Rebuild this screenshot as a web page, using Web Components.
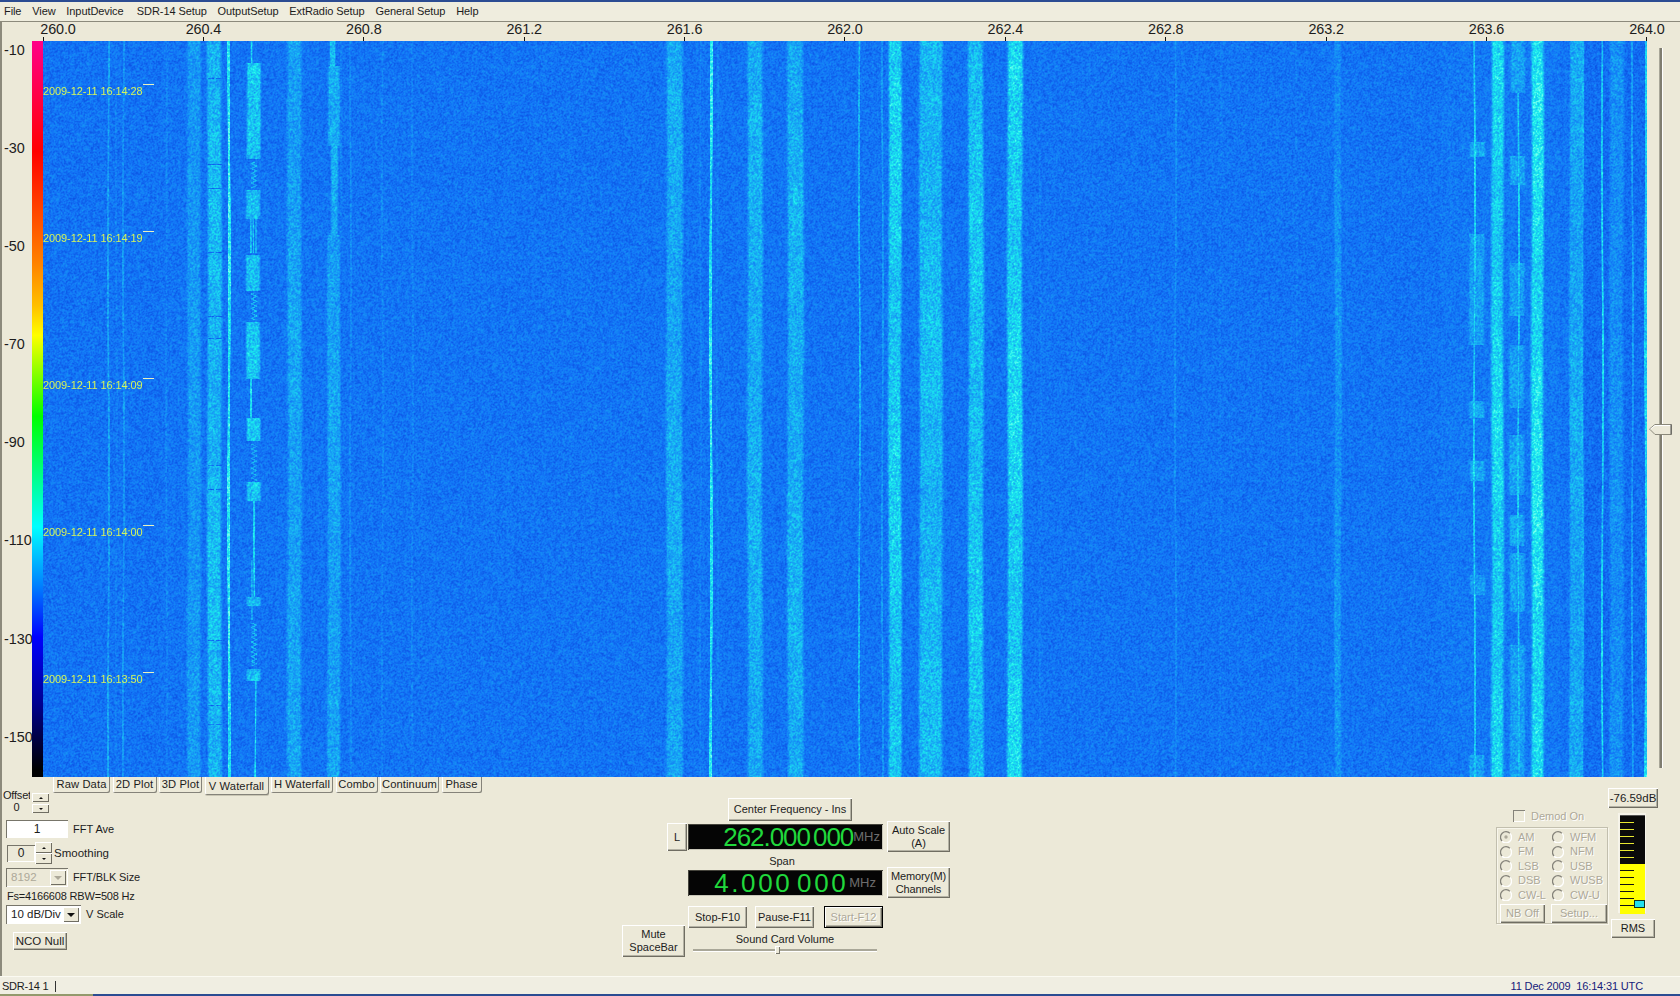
<!DOCTYPE html>
<html>
<head>
<meta charset="utf-8">
<title>SDR-14</title>
<style>
html,body{margin:0;padding:0;background:#ece9d8;overflow:hidden}
</style>
</head>
<body>
<sdr-app>
  <sdr-menu></sdr-menu>
  <sdr-plot></sdr-plot>
  <sdr-tabs></sdr-tabs>
  <sdr-controls></sdr-controls>
  <sdr-status></sdr-status>
</sdr-app>
<script>
// small base class, every element just says what goes in its shadow root
class SdrBase extends HTMLElement {
    constructor() {
        super()
        this.attachShadow({mode: 'open'})
    }
    getStyle() { return '' }
    getMarkup() { return '<slot></slot>' }
    connectedCallback() {
        if (this.done) return
        this.done = true
        const template = document.createElement('template')
        template.innerHTML = `<style>${this.getStyle()}</style>${this.getMarkup()}`
        this.shadowRoot.appendChild(template.content.cloneNode(true))
        if (this.afterRender) this.afterRender()
    }
}

class SdrApp extends SdrBase {
    getStyle() {
        return `
        :host{display:flex;flex-direction:column;width:1680px;height:996px;overflow:hidden;box-sizing:border-box;
            background:#ece9d8;border-top:2px solid #2b4c92;color:#1c1c1c;
            font:11px/13px "Liberation Sans",Arial,sans-serif}
        `
    }
}

class SdrMenu extends SdrBase {
    getStyle() {
        return `
        :host{display:flex;flex:none;box-sizing:border-box;height:19px;align-items:center;gap:10.800px;padding:0 0 1px 4px;background:#efedde;letter-spacing:-.08px}
        span{white-space:nowrap}
        span:nth-of-type(4){margin-left:2.500px}
        `
    }
    getMarkup() {
        return ['File','View','InputDevice','SDR-14 Setup','OutputSetup','ExtRadio Setup','General Setup','Help']
            .map(t => `<span>${t}</span>`).join('')
    }
}

class SdrPlot extends SdrBase {
    getStyle() {
        return `
        :host{display:block;flex:none;height:756px;border-top:1px solid #8c8a7c;border-left:2px solid #8c8a7c;box-sizing:border-box}
        .row{display:flex;margin-left:-2px;height:736px}
        sdr-xaxis{margin-left:-39.200px}
        `
    }
    getMarkup() {
        return `
        <sdr-xaxis></sdr-xaxis>
        <div class="row">
            <sdr-yaxis></sdr-yaxis>
            <sdr-colorbar></sdr-colorbar>
            <sdr-waterfall></sdr-waterfall>
            <sdr-vslider></sdr-vslider>
        </div>`
    }
}

class SdrXaxis extends SdrBase {
    getStyle() {
        return `
        :host{display:grid;grid-template-columns:repeat(11,160.4px);height:19px}
        div{display:flex;flex-direction:column;align-items:center;justify-content:flex-end}
        span{font-size:14.4px;line-height:15px;letter-spacing:-.1px}
        i{display:block;width:1px;height:4px;background:#111}
        div:first-of-type span{transform:translateX(15px)}
        `
    }
    getMarkup() {
        return ['260.0','260.4','260.8','261.2','261.6','262.0','262.4','262.8','263.2','263.6','264.0']
            .map(t => `<div><span>${t}</span><i></i></div>`).join('')
    }
}

class SdrYaxis extends SdrBase {
    getStyle() {
        return `
        :host{display:grid;grid-auto-rows:98.100px;flex:none;width:32px;box-sizing:border-box;padding-left:4px}
        span{font-size:14.4px;line-height:18px;white-space:nowrap}
        `
    }
    getMarkup() {
        return [-10,-30,-50,-70,-90,-110,-130,-150].map(t => `<span>${t}</span>`).join('')
    }
}

class SdrColorbar extends SdrBase {
    getStyle() {
        return `
        :host{display:block;flex:none;width:11px;height:736px;
            background:linear-gradient(180deg,#ff0088 0,#ff0040 8%,#ff0000 15%,#ff8000 30%,#ffc000 36%,#ffff00 40%,#00ff00 51%,#00ffff 66%,#0080ff 74%,#0000ff 81%,#000090 90%,#000000 99%)}
        `
    }
}

class SdrWaterfall extends SdrBase {
    getStyle() {
        return `
        :host{display:block;position:relative;flex:none;width:1604px;height:736px}
        canvas{display:block}
        .stamp{position:absolute;left:0;color:#d4f45c;font-size:11px;line-height:13px;white-space:nowrap;letter-spacing:-.1px}
        .stamp i{position:absolute;left:100px;top:-1px;width:11px;height:1px;background:#e8f0c0}
        `
    }
    getMarkup() {
        const stamps = [['16:14:28',44],['16:14:19',191],['16:14:09',338],['16:14:00',485],['16:13:50',632]]
        return `<canvas width="1604" height="736"></canvas>` +
            stamps.map(s => `<div class="stamp" style="top:${s[1]}px">2009-12-11 ${s[0]}<i></i></div>`).join('')
    }
    afterRender() {
        this.paint(this.shadowRoot.querySelector('canvas'))
    }
    paint(canvas) {
        const W = 1604, H = 736, X0 = 43, Y0 = 41
        const v = new Float32Array(W * H)
        let seed = 20091211
        const rnd = () => {
            seed = (seed * 1664525 + 1013904223) >>> 0
            return seed / 4294967296
        }
        const smooth = t => { t = Math.max(0, Math.min(1, t)); return t * t * (3 - 2 * t) }
        // a feature is x0,x1,y0,y1,amp plus edge softness and wobble
        const band = (x0, x1, y0, y1, amp, edge, wob) => {
            edge = edge === undefined ? 3.5 : edge
            wob = wob || 0
            if (edge >= 2) { x0 += edge * .4; x1 -= edge * .4 }
            const phase = x0 * 1.7
            for (let y = Math.max(y0, Y0); y < Math.min(y1, Y0 + H); y++) {
                const off = wob ? Math.sin(y * 1.3) * wob : Math.sin(y * .013 + phase) * .5
                const mod = 1 + .1 * Math.sin(y * .017 + phase) + .05 * Math.sin(y * .09 + phase * 2)
                const a = Math.floor(x0 - edge - 4), b = Math.ceil(x1 + edge + 4)
                for (let x = a; x < b; x++) {
                    const i = x - X0
                    if (i < 0 || i >= W) continue
                    const p = smooth((x + .5 - (x0 + off) + edge) / edge) * smooth(((x1 + off) + edge - x - .5) / edge)
                    const k = (y - Y0) * W + i
                    const val = amp * mod * p
                    if (val > v[k]) v[k] = val
                }
            }
        }
        const gap = (x0, x1, y0, y1) => {
            for (let y = y0; y < y1; y++) for (let x = x0; x < x1; x++) v[(y - Y0) * W + x - X0] = -.04
        }
        const T = 41, B = 777
        const thin = (x, amp, y0, y1) => band(x, x + 1, y0 === undefined ? T : y0, y1 === undefined ? B : y1, amp, .8)

        // left group
        thin(108, .38); thin(116, .1); thin(123, .3); thin(166, .1); thin(412, .12); thin(340, .1); thin(382, .08)
        band(188, 200, T, B, .32, 4)
        band(208, 221, T, B, .58, 3.5)
        gap(208, 222, 164, 165); gap(208, 222, 188, 189)
        ;[[78, 1], [252, 1], [316, 1], [338, 1], [465, 1], [489, 1], [640, 1], [705, 1], [724, 1]].forEach(g => {
            gap(208, 214, g[0], g[0] + g[1]); gap(216, 222, g[0], g[0] + g[1])
        })
        band(228, 230, T, B, 1, .5)
        // the bursty carrier near 260.5
        const burst = [[63,159],[190,219],[255,291],[322,379],[418,441],[482,501],[597,606],[669,681]]
        burst.forEach(s => band(247, 260, s[0], s[1], .66, 3))
        ;[[162,188],[293,320],[444,482],[623,666]].forEach(s => band(253, 255, s[0], s[1], .5, .8, 2))
        band(251, 252, T, 63, .75, .8)
        band(251, 252, 379, 418, .8, .6)
        band(250, 251, 219, 253, .6, .5); band(253, 254, 219, 253, .6, .5); band(256, 257, 219, 253, .5, .5)
        band(254, 255, 501, 597, .7, .6)
        band(255, 256, 681, B, .75, .6)
        band(251, 252, 560, 620, .45, .6)
        // 260.7
        band(288, 301, T, B, .4, 4)
        band(331, 335, T, 66, .7, 1.5)
        band(328, 339, 66, 146, .44, 3)
        band(331, 337, 146, 235, .48, 3)
        band(328, 340, 235, B, .4, 3.5)
        thin(350, .16); thin(382, .14)

        // centre group
        band(667, 682, T, B, .46, 4)
        band(710, 712, T, B, .95, .6)
        thin(700, .12); thin(717, .12)
        band(748, 762, T, B, .5, 4)
        band(788, 803, T, B, .5, 4)
        band(793, 797, 185, 205, .72, 1)
        thin(859, .55); thin(882, .3)
        band(889, 901, T, B, .74, 3.5)
        band(920, 942, T, B, .58, 4)
        band(969, 983, T, B, .66, 4)
        band(1008, 1022, T, B, .78, 4)
        thin(1175, .2); thin(1040, .08); thin(1296, .06); thin(1220, .06)
        band(1335, 1341, T, B, .2, 2.5)
        band(1335, 1341, 170, B, .3, 2.5)

        // right group
        thin(1474, .72)
        ;[[142,157],[234,345],[401,418],[461,481],[575,595],[755,777]].forEach(s => band(1470, 1484, s[0], s[1], .38, 3))
        band(1492, 1503, T, B, .74, 4)
        band(1511, 1524, T, 93, .32, 3)
        thin(1518, .65, 93, 770)
        ;[[156,185],[263,316],[345,408],[435,495],[515,546],[553,612],[645,777]].forEach(s => band(1510, 1524, s[0], s[1], .36, 3))
        gap(1510, 1516, 328, 340); gap(1520, 1525, 328, 340)
        band(1532, 1543, T, B, .88, 4)
        band(1570, 1583, T, B, .44, 3)
        thin(1582, .5)
        thin(1602, .8)
        band(1610, 1623, T, B, .3, 4)
        thin(1632, .42)
        band(1645, 1647, T, B, .8, .6)

        // per column streaks and the darker bit on the far right
        const col = new Float32Array(W)
        for (let i = 0; i < W; i++) {
            col[i] = (rnd() - .5) * .025
            const x = i + X0
            if (x > 1583 && x < 1647) col[i] -= .06
            if (x > 1440 && x < 1560) col[i] += .04
            if (x < 160) col[i] -= .015
        }
        const ctx = canvas.getContext('2d')
        const img = ctx.createImageData(W, H)
        const d = img.data
        // grain is about two pixels wide in the picture
        const gw = W + 2
        const grain = new Float32Array(gw * (H + 2))
        for (let i = 0; i < grain.length; i++) grain[i] = rnd() - .5
        const stops = [[-.3, 12, 84, 228], [0, 18, 116, 246], [.5, 24, 172, 244], [1, 26, 236, 238], [1.4, 120, 255, 240]]
        for (let y = 0; y < H; y++) {
            for (let x = 0; x < W; x++) {
                const n = (grain[y * gw + x] * 1.2 + grain[y * gw + x + 1] * .8 + grain[(y + 1) * gw + x] * .8 + grain[(y + 1) * gw + x + 1] * .4)
                const base = v[y * W + x]
                let t = base + col[x] + n * (.2 + Math.max(0, base) * .16)
                t = Math.max(-.3, Math.min(1.4, t))
                let s = 0
                while (s < stops.length - 2 && t > stops[s + 1][0]) s++
                const a = stops[s], b = stops[s + 1], f = (t - a[0]) / (b[0] - a[0])
                const k = (y * W + x) * 4
                d[k] = a[1] + (b[1] - a[1]) * f
                d[k + 1] = a[2] + (b[2] - a[2]) * f
                d[k + 2] = a[3] + (b[3] - a[3]) * f
                d[k + 3] = 255
            }
        }
        ctx.putImageData(img, 0, 0)
    }
}

class SdrVslider extends SdrBase {
    getStyle() {
        return `
        :host{display:block;position:relative;flex:1}
        .track{width:2px;height:720px;margin:7px 0 0 12px;background:#7f7d70;border-right:1px solid #fff;border-left:1px solid #a8a698}
        svg{position:absolute;left:2px;top:383px}
        `
    }
    getMarkup() {
        return `<div class="track"></div>
        <svg width="23" height="11" viewBox="0 0 23 11"><path d="M.5 5 6 .5h16.500v10H6z" fill="#ece9d8" stroke="#8a887a"/><path d="M1.500 5 6 1.500h16" fill="none" stroke="#fff"/><path d="M22 .5v10" stroke="#555"/></svg>`
    }
}

class SdrTabs extends SdrBase {
    getStyle() {
        return `
        :host{display:flex;flex:none;height:16px;padding-left:53px;gap:2.500px;position:relative;align-items:flex-start;box-shadow:inset 2px 0 #8c8a7c}
        span{display:flex;align-items:center;justify-content:center;box-sizing:border-box;height:16px;padding-bottom:2px;background:#ece9d8;white-space:nowrap;
            box-shadow:inset -1px -1px #85837a,inset 1px 0 #fff;border-radius:0 0 2px 2px;letter-spacing:.1px;font-size:11.200px}
        .on{height:18px;padding:1px 0 0;box-shadow:inset -1px -1px #85837a,inset 1px 0 #fff,0 1px #c9c6b4}
        `
    }
    getMarkup() {
        return [['Raw Data',57],['2D Plot',44],['3D Plot',43],['V Waterfall',64,1],['H Waterfall',62],['Combo',42],['Continuum',59],['Phase',40]]
            .map(t => `<span style="width:${t[1]}px"${t[2] ? ' class="on"' : ''}>${t[0]}</span>`).join('')
    }
}

class WinBtn extends SdrBase {
    getStyle() {
        return `
        :host{display:inline-flex;flex:none;box-sizing:border-box;align-items:center;justify-content:center;text-align:center;background:#ece9d8;
            white-space:nowrap;line-height:13px;
            box-shadow:inset 1px 1px #fff,inset -1px -1px #6f6d62,inset -2px -2px #b4b2a4}
        :host([disabled]){color:#aca899;text-shadow:1px 1px #fff}
        :host([default]){border:1px solid #000}
        `
    }
}

class SdrSpin extends SdrBase {
    getStyle() {
        return `
        :host{display:flex;flex:none;flex-direction:column;width:17px;justify-content:space-between}
        b{display:flex;align-items:center;justify-content:center;flex:1;max-height:var(--cell,11px);background:#ece9d8;
            box-shadow:inset 1px 1px #fff,inset -1px -1px #6f6d62}
        i{display:block;border-left:2px solid transparent;border-right:2px solid transparent}
        .u{border-bottom:2px solid #111}
        .d{border-top:2px solid #111}
        `
    }
    getMarkup() { return `<b><i class="u"></i></b><b><i class="d"></i></b>` }
}

class SdrCombo extends SdrBase {
    getStyle() {
        return `
        :host{display:flex;flex:none;box-sizing:border-box;align-items:center;background:#fff;
            box-shadow:inset 1px 1px #77756a,inset -1px -1px #fff;padding:2px}
        :host([disabled]){background:#ece9d8;color:#aca899}
        span{flex:1;padding-left:3px;font-size:11.500px}
        b{display:flex;align-items:center;justify-content:center;width:16px;height:100%;background:#ece9d8;
            box-shadow:inset 1px 1px #fff,inset -1px -1px #6f6d62}
        i{display:block;border:4px solid transparent;border-top:4px solid #111;border-bottom:0}
        :host([disabled]) i{border-top-color:#aca899}
        `
    }
    getMarkup() { return `<span><slot></slot></span><b><i></i></b>` }
}

class SdrLcd extends SdrBase {
    getStyle() {
        return `
        :host{display:flex;box-sizing:border-box;align-items:center;justify-content:flex-end;background:#050505;white-space:nowrap;
            box-shadow:inset 1px 1px #45443c,inset -1px -1px #c8c6b8}
        .num{color:#20d83c;font-size:26px;line-height:26px}
        .unit{color:#6d6d6d;font-size:13px;line-height:14px}
        `
    }
    getMarkup() {
        return `<span class="num" style="${this.getAttribute('numstyle')}">${this.getAttribute('value')}</span><span class="unit" style="${this.getAttribute('unitstyle')}">MHz</span>`
    }
}

class SdrRadio extends SdrBase {
    getStyle() {
        return `
        :host{display:flex;align-items:center;gap:6px;height:14.500px;color:#aca899;text-shadow:1px 1px #fff;white-space:nowrap}
        svg{flex:none}
        `
    }
    getMarkup() {
        const dot = this.hasAttribute('checked') ? '<circle cx="6" cy="6" r="1.700" fill="#aca899"/>' : ''
        return `<svg width="12" height="12" viewBox="0 0 12 12">
            <path d="M10 2.400A5.300 5.300 0 0 0 2 10" fill="none" stroke="#85837a" stroke-width="1.300"/>
            <path d="M2 10.200A5.300 5.300 0 0 0 10 2.400" fill="none" stroke="#fff" stroke-width="1.300"/>${dot}</svg><slot></slot>`
    }
}

class SdrMeter extends SdrBase {
    getStyle() {
        return `
        :host{display:flex;flex-direction:column;position:relative;box-sizing:border-box;width:28px;height:100px;border:2px solid #f6f4ea;border-right-width:1px;border-bottom-width:1px;background:#000}
        div{display:flex;flex-direction:column;height:50px;box-sizing:border-box;flex:none}
        .hi{padding-top:6px;gap:6px;height:49px;background:#0a0a0a;border-top:1px solid #555}
        .lo{padding-top:6px;gap:6px;background:#ffff00}
        i{display:block;flex:none;height:1px;width:14px}
        .hi i{background:#e8e830}
        .lo i{background:#111}
        .lo i:last-child{width:17px}
        b{position:absolute;right:0;bottom:4px;width:9px;height:6px;background:#22e0ee;border:1px solid #103020}
        `
    }
    getMarkup() {
        const t = '<i></i>'.repeat(6)
        return `<div class="hi">${t}</div><div class="lo">${t}</div><b></b>`
    }
}

class SdrControls extends SdrBase {
    getStyle() {
        return `
        :host{display:grid;flex:none;height:183px;grid-template-columns:622px 328px 546px 112px 72px;box-shadow:inset 2px 0 #8c8a7c}
        `
    }
    getMarkup() {
        return `<sdr-left></sdr-left><sdr-center></sdr-center><span></span><sdr-demod></sdr-demod><sdr-level></sdr-level>`
    }
}

class SdrLeft extends SdrBase {
    getStyle() {
        return `
        :host{display:flex;flex-direction:column;align-items:flex-start;padding-left:6px;white-space:nowrap}
        .off{display:flex;margin-left:-3px;height:20px;gap:2px}
        .off div{width:27px;height:25px;margin-top:-4px;overflow:hidden;text-align:center;line-height:11.500px;letter-spacing:-.2px;padding-top:1px;box-sizing:border-box}
        .off div span{display:block;text-align:left}
        .off sdr-spin{height:20px;--cell:9px}
        .line{display:flex;align-items:center}
        .field{box-sizing:border-box;display:flex;align-items:center;justify-content:center;box-shadow:inset 1px 1px #77756a,inset -1px -1px #fff;font-size:12px}
        .lab{margin-left:5px}
        `
    }
    getMarkup() {
        return `
        <div class="off"><div><span>Offset</span>0</div><sdr-spin></sdr-spin></div>
        <div class="line" style="margin-top:7px;height:18px"><div class="field" style="width:62px;height:18px;background:#fff">1</div><span class="lab">FFT Ave</span></div>
        <div class="line" style="margin-top:4px;height:22px;margin-left:1px"><div class="field" style="width:28px;height:17px">0</div><sdr-spin style="height:22px"></sdr-spin><span style="margin-left:2px;font-size:11.500px">Smoothing</span></div>
        <div class="line" style="margin-top:4px;height:19px"><sdr-combo disabled style="width:62px;height:19px">8192</sdr-combo><span class="lab" style="letter-spacing:-.12px">FFT/BLK Size</span></div>
        <div style="margin:2px 0 0 1px;height:15px;line-height:15px;letter-spacing:-.18px">Fs=4166608 RBW=508 Hz</div>
        <div class="line" style="height:19px;margin-top:1px"><sdr-combo style="width:75px;height:19px">10 dB/Div</sdr-combo><span class="lab">V Scale</span></div>
        <win-btn style="width:54px;height:18px;margin:8px 0 0 7px;font-size:11.500px">NCO Null</win-btn>`
    }
}

class SdrCenter extends SdrBase {
    getStyle() {
        return `
        :host{display:grid;grid-template-columns:45px 21px 195px 4px 63px;grid-template-rows:5px 23px 31px 15px 31px 8px 19px 3px 29px;text-align:center}
        .c3{grid-column:3}
        .c5{grid-column:5}
        sdr-lcd{height:26px;margin-top:3px}
        .stops{grid-column:3;grid-row:7/9;display:flex;gap:8px}
        .vol{grid-column:3;grid-row:9;padding:5px 6px 0 5px;line-height:13px}
        .track{height:2px;margin-top:3px;background:#a9a798;border-bottom:1px solid #fff;display:flex}
        .track i{display:block;width:5px;height:8px;margin:-3px 0 0 82px;background:#ece9d8;box-shadow:inset 1px 1px #fff,inset -1px -1px #77756a}
        `
    }
    getMarkup() {
        return `
        <win-btn class="c3" style="grid-row:2;width:124px;margin-left:40px">Center Frequency - Ins</win-btn>
        <win-btn style="grid-column:2;grid-row:3;width:20px;height:28px;margin-top:2px">L</win-btn>
        <sdr-lcd class="c3" style="grid-row:3" value="262.000 000" numstyle="letter-spacing:-1.050px;word-spacing:-3px" unitstyle="margin:0 3px 0 0"></sdr-lcd>
        <win-btn class="c5" style="grid-row:3">Auto Scale<br>(A)</win-btn>
        <div class="c3" style="grid-row:4;align-self:end;line-height:11px;padding-right:7px">Span</div>
        <sdr-lcd class="c3" style="grid-row:5" value="4.000 000" numstyle="letter-spacing:2.600px;word-spacing:-5px" unitstyle="margin:0 7px 0 1px"></sdr-lcd>
        <win-btn class="c5" style="grid-row:5;letter-spacing:-.12px">Memory(M)<br>Channels</win-btn>
        <div class="stops">
            <win-btn style="width:59px;height:22px">Stop-F10</win-btn>
            <win-btn style="width:59px;height:22px">Pause-F11</win-btn>
            <win-btn default disabled style="width:59px;height:22px;margin-left:2px">Start-F12</win-btn>
        </div>
        <win-btn style="grid-column:1/3;grid-row:8/10;width:63px;height:32px">Mute<br>SpaceBar</win-btn>
        <div class="vol">Sound Card Volume<div class="track"><i></i></div></div>`
    }
}

class SdrDemod extends SdrBase {
    getStyle() {
        return `
        :host{display:block;padding-top:17px}
        .top{display:flex;align-items:center;height:12px;margin-left:17px;gap:6px;color:#aca899;text-shadow:1px 1px #fff}
        .top i{display:block;width:12px;height:12px;box-sizing:border-box;background:#ece9d8;box-shadow:inset 1px 1px #85837a,inset -1px -1px #fff}
        .box{box-sizing:border-box;margin-top:5px;height:97px;border:1px solid #c2bfae;box-shadow:inset 1px 1px #f8f6ec,1px 1px #f8f6ec;padding:2px 0 0 3px}
        .radios{display:grid;grid-template-columns:52px 1fr}
        .btns{display:flex;gap:6px;margin-top:1px}
        `
    }
    getMarkup() {
        const rows = [['AM','WFM'],['FM','NFM'],['LSB','USB'],['DSB','WUSB'],['CW-L','CW-U']]
        return `
        <div class="top"><i></i>Demod On</div>
        <div class="box">
            <div class="radios">${rows.map((r, i) => `<sdr-radio${i ? '' : ' checked'}>${r[0]}</sdr-radio><sdr-radio>${r[1]}</sdr-radio>`).join('')}</div>
            <div class="btns"><win-btn disabled style="width:45px;height:19px">NB Off</win-btn><win-btn disabled style="width:56px;height:19px">Setup...</win-btn></div>
        </div>`
    }
}

class SdrLevel extends SdrBase {
    getStyle() {
        return `
        :host{display:flex;flex-direction:column;align-items:flex-start}
        `
    }
    getMarkup() {
        return `
        <win-btn style="width:50px;height:20px;margin-top:-5px;font-size:11.500px">-76.59dB</win-btn>
        <sdr-meter style="margin:5px 0 0 10px"></sdr-meter>
        <win-btn style="width:44px;height:19px;margin:6px 0 0 3px">RMS</win-btn>`
    }
}

class SdrStatus extends SdrBase {
    getStyle() {
        return `
        :host{display:block;flex:1;background:#f0eee2;border-top:1px solid #fbfaf2;box-sizing:border-box;padding-top:2px}
        .bar{display:flex;align-items:center;height:15px;padding:0 37px 0 2px}
        .sep{margin-left:7px;width:1px;height:11px;background:#333}
        .name{letter-spacing:-.25px}
        .time{margin-left:auto;color:#16207a;letter-spacing:-.15px;white-space:pre}
        .edge{height:2px;background:linear-gradient(90deg,#93996c 93px,#2b4c92 93px)}
        `
    }
    getMarkup() {
        return `<div class="bar"><span class="name">SDR-14 1</span><i class="sep"></i><span class="time">11 Dec 2009  16:14:31 UTC</span></div><div class="edge"></div>`
    }
}

customElements.define('sdr-app', SdrApp)
customElements.define('sdr-menu', SdrMenu)
customElements.define('sdr-plot', SdrPlot)
customElements.define('sdr-xaxis', SdrXaxis)
customElements.define('sdr-yaxis', SdrYaxis)
customElements.define('sdr-colorbar', SdrColorbar)
customElements.define('sdr-waterfall', SdrWaterfall)
customElements.define('sdr-vslider', SdrVslider)
customElements.define('sdr-tabs', SdrTabs)
customElements.define('win-btn', WinBtn)
customElements.define('sdr-spin', SdrSpin)
customElements.define('sdr-combo', SdrCombo)
customElements.define('sdr-lcd', SdrLcd)
customElements.define('sdr-radio', SdrRadio)
customElements.define('sdr-meter', SdrMeter)
customElements.define('sdr-controls', SdrControls)
customElements.define('sdr-left', SdrLeft)
customElements.define('sdr-center', SdrCenter)
customElements.define('sdr-demod', SdrDemod)
customElements.define('sdr-level', SdrLevel)
customElements.define('sdr-status', SdrStatus)
</script>
</body>
</html>
